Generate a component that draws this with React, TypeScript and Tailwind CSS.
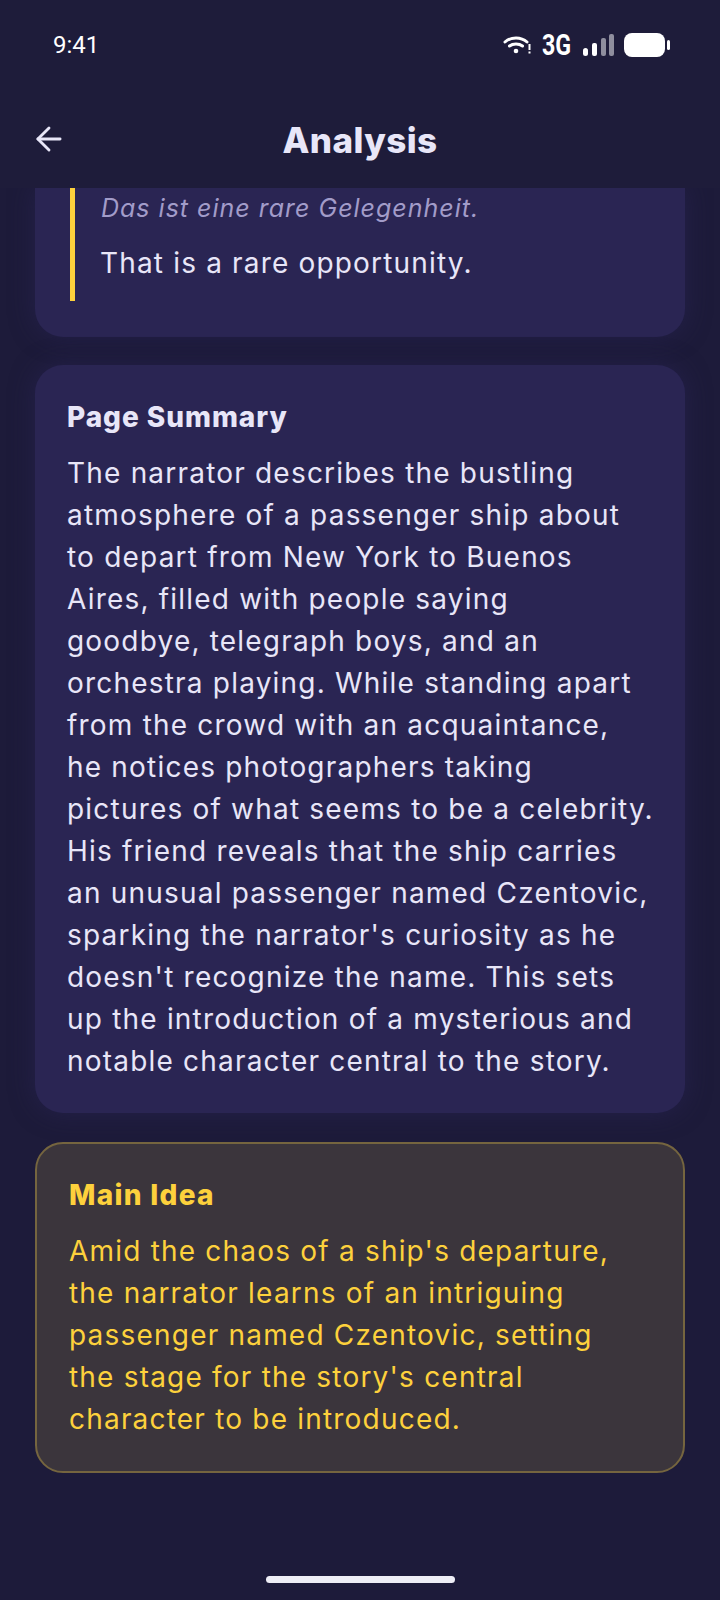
import { ArrowLeft } from "lucide-react";

const summaryLines = [
  "The narrator describes the bustling",
  "atmosphere of a passenger ship about",
  "to depart from New York to Buenos",
  "Aires, filled with people saying",
  "goodbye, telegraph boys, and an",
  "orchestra playing. While standing apart",
  "from the crowd with an acquaintance,",
  "he notices photographers taking",
  "pictures of what seems to be a celebrity.",
  "His friend reveals that the ship carries",
  "an unusual passenger named Czentovic,",
  "sparking the narrator's curiosity as he",
  "doesn't recognize the name. This sets",
  "up the introduction of a mysterious and",
  "notable character central to the story.",
];

const ideaLines = [
  "Amid the chaos of a ship's departure,",
  "the narrator learns of an intriguing",
  "passenger named Czentovic, setting",
  "the stage for the story's central",
  "character to be introduced.",
];

function StatusIcons() {
  return (
    <div className="flex items-center">
      <svg width="29" height="22" viewBox="0 0 29 22" fill="none">
        <path d="M2 8C8 2.5 18 2.5 24 8" stroke="white" strokeWidth="3" strokeLinecap="round" />
        <path d="M6.5 12C10 9.3 16 9.3 19.5 12" stroke="white" strokeWidth="3" strokeLinecap="round" />
        <circle cx="13" cy="17" r="2.3" fill="white" />
        <rect x="25.5" y="10" width="2" height="6" fill="white" />
        <rect x="25.5" y="17.5" width="2" height="2" fill="white" />
      </svg>
      <span className="ml-[10px] w-[35px] origin-left font-['Roboto',sans-serif] text-[29px] font-bold leading-none text-white [transform:scaleX(0.8)]">
        3G
      </span>
      <svg className="ml-[6px]" width="32" height="24" viewBox="0 0 32 24">
        <rect x="0" y="15" width="5" height="8" rx="2.5" fill="white" />
        <rect x="9" y="10" width="5" height="13" rx="2" fill="white" />
        <rect x="18" y="5" width="5" height="18" rx="2" fill="#8f8e9e" />
        <rect x="26" y="1" width="5" height="22" rx="2" fill="#8f8e9e" />
      </svg>
      <svg className="ml-[9px]" width="46" height="24" viewBox="0 0 46 24">
        <rect x="0" y="0" width="41" height="24" rx="8" fill="white" />
        <rect x="43" y="7" width="3" height="10" rx="1.5" fill="white" />
      </svg>
    </div>
  );
}

export default function App() {
  return (
    <div className="relative flex h-[1600px] w-[720px] flex-col overflow-hidden bg-[#1d1b3a] font-['Inter',sans-serif]">
      {/* header */}
      <header className="z-10 h-[188px] shrink-0 bg-[#1e1c3a]">
        <div className="flex h-[90px] items-center justify-between pl-[53px] pr-[50px]">
          <span className="font-['Roboto',sans-serif] text-[24px] text-white">9:41</span>
          <StatusIcons />
        </div>
        <div className="relative mt-[18px] flex h-[64px] items-center justify-center">
          <ArrowLeft className="absolute left-[30px] top-[12px] text-[#e8e6f8]" size={38} strokeWidth={1.8} />
          <h1 className="text-[35px] font-extrabold tracking-[0.4px] text-[#e8e6f8]">Analysis</h1>
        </div>
      </header>

      {/* scrolled content */}
      <main className="flex flex-col px-[35px]">
        <section className="h-[149px] rounded-b-[28px] bg-[#2a2553] pl-[35px] shadow-[0_0_24px_rgba(42,37,85,0.6)]">
          <div className="h-[113px] border-l-[5px] border-[#fdd13c] pl-[26px]">
            <p className="pt-[2px] text-[25px] italic leading-[36px] tracking-[1px] text-[#a29cc9]">Das ist eine rare Gelegenheit.</p>
            <p className="mt-[19px] ml-[-1px] text-[28px] leading-[36px] tracking-[1.17px] text-[#e8e6f8]">That is a rare opportunity.</p>
          </div>
        </section>

        <section className="mt-[28px] h-[748px] rounded-[28px] bg-[#2a2553] px-[32px] pt-[34px] shadow-[0_0_24px_rgba(42,37,85,0.6)]">
          <h2 className="text-[28px] font-extrabold leading-[36px] tracking-[0.95px] text-[#e8e6f8]">Page Summary</h2>
          <p className="mt-[17px] whitespace-nowrap text-[28px] leading-[42px] tracking-[1.2px] text-[#e8e6f8]">
            {summaryLines.map((line) => (
              <span key={line} className="block">{line}</span>
            ))}
          </p>
        </section>

        <section className="mt-[29px] h-[331px] rounded-[28px] border-2 border-[#75653f] bg-[#3b353c] px-[32px] pt-[33px]">
          <h2 className="text-[28px] font-extrabold leading-[36px] tracking-[1.3px] text-[#fdd13c]">Main Idea</h2>
          <p className="mt-[17px] whitespace-nowrap text-[28px] leading-[42px] tracking-[1.2px] text-[#fdd13c]">
            {ideaLines.map((line) => (
              <span key={line} className="block">{line}</span>
            ))}
          </p>
        </section>
      </main>

      {/* home indicator */}
      <div className="absolute bottom-[17px] left-[266px] h-[7px] w-[189px] rounded-full bg-[#eeeef6]" />
    </div>
  );
}
